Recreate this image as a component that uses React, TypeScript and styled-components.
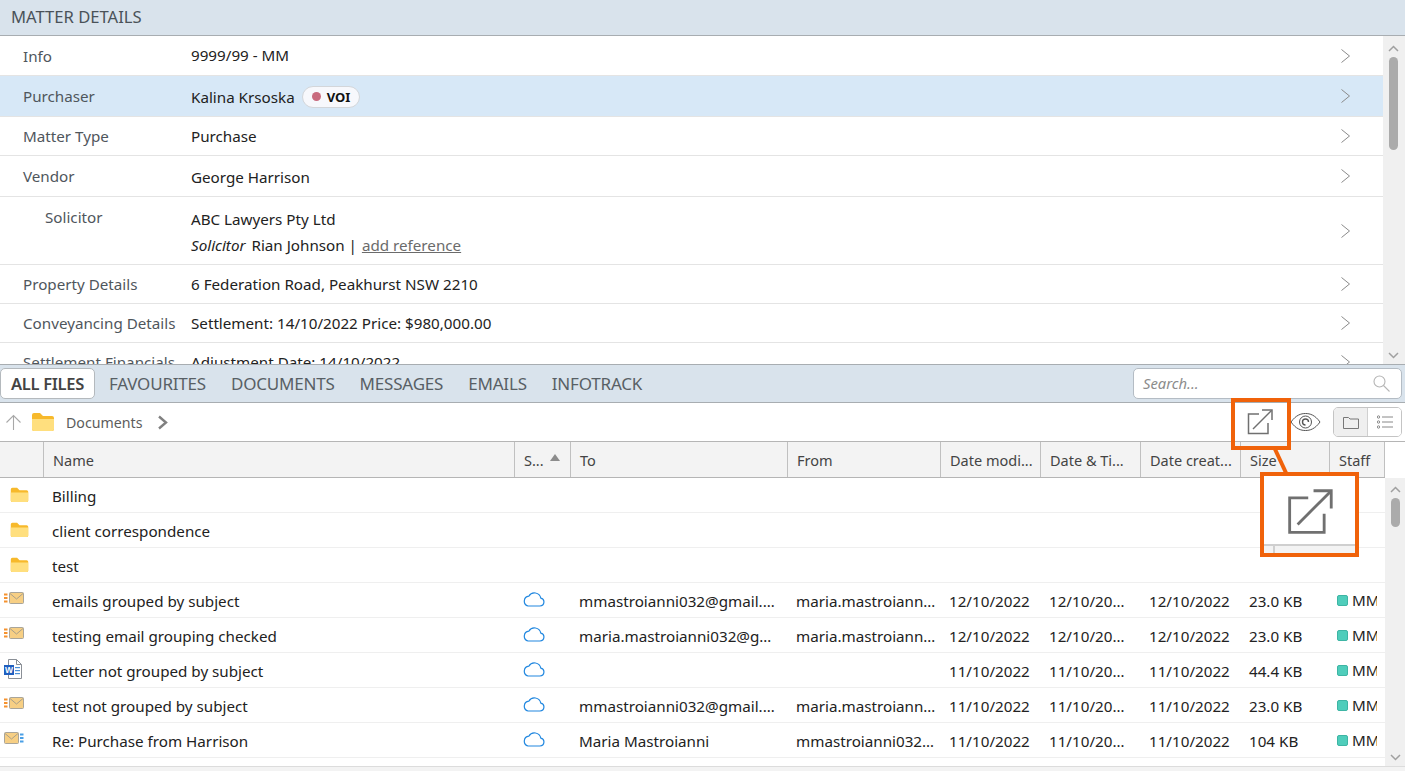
import React from 'react';
import styled, { createGlobalStyle } from 'styled-components';

const GlobalStyle = createGlobalStyle`
    html, body { margin: 0; padding: 0; background: #fff; }
    body { font-family: "Noto Sans", "Open Sans", "Liberation Sans", sans-serif; font-size: 15.2px; color: #333; }
    * { box-sizing: border-box; }
`;

const Page = styled.div`
    position: relative;
    width: 1405px;
    height: 771px;
    overflow: hidden;
    display: flex;
    flex-direction: column;
    background: #fff;
`;

const PanelHeader = styled.div`
    height: 36px;
    flex: none;
    display: flex;
    align-items: center;
    padding: 0 0 3px 11px;
    background: #d9e3ec;
    border-bottom: 1px solid #a8adb1;
    font-size: 16.6px;
    color: #4a5259;
`;

const DetailsArea = styled.div`
    height: 328px;
    flex: none;
    display: flex;
    overflow: hidden;
`;

const DetailsList = styled.div`
    width: 1383px;
    flex: none;
    overflow: hidden;
`;

const DetailRow = styled.div<{ $h: number; $selected?: boolean }>`
    height: ${(p) => p.$h}px;
    flex: none;
    display: grid;
    grid-template-columns: 191px 1fr 52px;
    align-items: center;
    border-bottom: 1px solid #e4e4e4;
    background: ${(p) => (p.$selected ? '#d7e8f7' : '#fff')};
`;

const DetailLabel = styled.div<{ $indent?: boolean; $top?: boolean }>`
    padding-left: ${(p) => (p.$indent ? 45 : 23)}px;
    align-self: ${(p) => (p.$top ? 'start' : 'center')};
    padding-top: ${(p) => (p.$top ? 10 : 0)}px;
    color: #4f565c;
    white-space: nowrap;
`;

const DetailValue = styled.div<{ $drop?: number }>`
    color: #222;
    display: flex;
    flex-direction: column;
    gap: 6px;
    padding-top: ${(p) => p.$drop ?? 0}px;
    padding-bottom: ${(p) => (p.$drop ? 0 : 1)}px;
`;

const ValueLine = styled.div`
    display: flex;
    align-items: center;
    gap: 3px;
`;

const Em = styled.em`
    font-style: italic;
    margin-right: 2px;
`;

const RefLink = styled.span`
    margin-left: 1px;
    color: #6b6b6b;
    text-decoration: underline;
`;

const Badge = styled.span`
    height: 22px;
    display: inline-flex;
    align-items: center;
    gap: 6px;
    padding: 0 9px;
    margin-left: 4px;
    background: #f7f8fc;
    border: 1px solid #d3d6da;
    border-radius: 11px;
    font-size: 13px;
    font-weight: 700;
    color: #111;
`;

const BadgeDot = styled.i`
    width: 9px;
    height: 9px;
    border-radius: 50%;
    background: #c86a7e;
`;

const ScrollTrack = styled.div`
    width: 22px;
    margin-left: auto;
    flex: none;
    position: relative;
    background: #f0f0f0;
`;

const ScrollThumb = styled.div<{ $top: number; $h: number }>`
    position: absolute;
    left: 6px;
    top: ${(p) => p.$top}px;
    width: 9px;
    height: ${(p) => p.$h}px;
    border-radius: 5px;
    background: #ababab;
`;

const ScrollArrow = styled.svg<{ $top?: number; $bottom?: number }>`
    position: absolute;
    left: 5px;
    width: 11px;
    height: 7px;
    ${(p) => (p.$top !== undefined ? `top: ${p.$top}px;` : `bottom: ${p.$bottom}px;`)}
`;

const TabBar = styled.div`
    height: 39px;
    flex: none;
    display: flex;
    align-items: center;
    padding: 0 3px 0 0;
    background: #d9e3ec;
    border-top: 1px solid #a8adb1;
    border-bottom: 1px solid #a8adb1;
`;

const Tab = styled.div<{ $active?: boolean }>`
    height: 31px;
    display: flex;
    align-items: center;
    padding: 0 ${(p) => (p.$active ? 10 : 12.5)}px 1px;
    margin-right: ${(p) => (p.$active ? 1.5 : 0)}px;
    font-size: ${(p) => (p.$active ? 16.5 : 17)}px;
    letter-spacing: ${(p) => (p.$active ? -0.3 : -0.2)}px;
    font-weight: ${(p) => (p.$active ? 600 : 400)};
    color: ${(p) => (p.$active ? '#444' : '#585f65')};
    background: ${(p) => (p.$active ? '#fff' : 'transparent')};
    border: ${(p) => (p.$active ? '1px solid #b4b9bd' : 'none')};
    border-radius: 5px;
`;

const SearchBox = styled.div`
    width: 269px;
    height: 31px;
    margin-left: auto;
    display: flex;
    align-items: center;
    justify-content: space-between;
    padding: 0 11px 1px 9px;
    background: #fff;
    border: 1px solid #b4bcc4;
    border-radius: 5px;
    font-style: italic;
    font-size: 14.8px;
    color: #8c8c8c;
`;

const Toolbar = styled.div`
    height: 38px;
    flex: none;
    display: flex;
    align-items: center;
    padding: 0 3px 0 5px;
    background: #fff;
`;

const UpSlot = styled.span`
    display: flex;
    margin-right: 9px;
`;

const Crumb = styled.span`
    margin: 0 15px 0 11px;
    font-size: 14.2px;
    color: #5c5c5c;
`;

const ToolIcons = styled.div`
    margin-left: auto;
    display: flex;
    align-items: center;
`;

const ToolSlot = styled.div<{ $w: number }>`
    width: ${(p) => p.$w}px;
    display: flex;
    justify-content: center;
    align-items: center;
`;

const ViewToggle = styled.div`
    width: 69px;
    height: 30px;
    margin-left: 12px;
    display: flex;
    border: 1px solid #c4c4c4;
    border-radius: 5px;
    overflow: hidden;
`;

const ToggleCell = styled.div<{ $active?: boolean }>`
    flex: 1;
    display: flex;
    align-items: center;
    justify-content: center;
    background: ${(p) => (p.$active ? '#efefef' : '#fff')};
    & + & { border-left: 1px solid #d0d0d0; }
`;

const columns = '44px 471px 56px 217px 153px 100px 100px 100px 89px 55px';

const HeaderRow = styled.div`
    height: 37px;
    flex: none;
    display: flex;
    border-top: 1px solid #b5b5b5;
`;

const HeaderCells = styled.div`
    width: 1385px;
    display: grid;
    grid-template-columns: ${columns};
    background: #f3f3f3;
    border-bottom: 1px solid #b5b5b5;
`;

const HeaderCell = styled.div`
    display: flex;
    align-items: center;
    gap: 6px;
    padding-left: 9px;
    border-right: 1px solid #c0c0c0;
    font-size: 14.5px;
    color: #444;
    white-space: nowrap;
    overflow: hidden;
`;

const SortMark = styled.span`
    width: 0;
    height: 0;
    margin-top: -4px;
    border-left: 5px solid transparent;
    border-right: 5px solid transparent;
    border-bottom: 7px solid #8c8c8c;
`;

const TableArea = styled.div`
    height: 288px;
    flex: none;
    display: flex;
    overflow: hidden;
`;

const TableRows = styled.div`
    width: 1385px;
    flex: none;
`;

const FileRow = styled.div`
    height: 35px;
    display: grid;
    grid-template-columns: ${columns};
    align-items: center;
    border-bottom: 1px solid #efefef;
    color: #222;
`;

const FileCell = styled.div<{ $trim?: number }>`
    padding: 1px ${(p) => p.$trim ?? 0}px 0 8px;
    white-space: nowrap;
    overflow: hidden;
    text-overflow: ellipsis;
`;

const IconCell = styled.div<{ $folder?: boolean }>`
    display: flex;
    align-items: center;
    padding-left: ${(p) => (p.$folder ? 10 : 4)}px;
    margin-top: ${(p) => (p.$folder ? 0 : -3)}px;
`;

const CloudCell = styled.div`
    display: flex;
    padding-left: 7px;
    margin-top: -2px;
`;

const StaffCell = styled.div`
    width: 47px;
    display: flex;
    align-items: center;
    gap: 4px;
    padding-left: 7px;
    overflow: hidden;
    white-space: nowrap;
`;

const StaffSquare = styled.i`
    width: 11px;
    height: 11px;
    flex: none;
    border-radius: 2px;
    background: #4fcdbb;
    border: 1px solid #3eb5a4;
`;

const StatusBar = styled.div`
    flex: 1;
    background: #f3f3f3;
    border-top: 1px solid #dcdcdc;
`;

const CalloutBox = styled.div<{ $x: number; $y: number; $w: number; $h: number }>`
    position: absolute;
    left: ${(p) => p.$x}px;
    top: ${(p) => p.$y}px;
    width: ${(p) => p.$w}px;
    height: ${(p) => p.$h}px;
    border: 4px solid #f0620a;
    display: flex;
    align-items: center;
    justify-content: center;
`;

const ZoomBox = styled(CalloutBox)`
    background: #fff;
    padding-bottom: 5px;
`;

const ZoomEdge = styled.div`
    position: absolute;
    left: 0;
    right: 0;
    bottom: 0;
    height: 9px;
    background: #f3f3f3;
    border-top: 2px solid #cfcfcf;
`;

const ZoomTick = styled.div`
    position: absolute;
    left: 9px;
    bottom: 0;
    width: 2px;
    height: 9px;
    background: #cfcfcf;
`;

const CalloutLine = styled.svg`
    position: absolute;
    left: 1266px;
    top: 445px;
    width: 30px;
    height: 32px;
`;

const Chevron = () => (
    <svg width="52" height="16" viewBox="0 0 52 16" fill="none">
        <path d="M10.5 1.500 L18.5 8 L10.5 14.500" stroke="#8a8a8a" strokeWidth="1" />
    </svg>
);

const ScrollBar = ({ top, h }: { top: number; h: number }) => (
    <ScrollTrack>
        <ScrollArrow $top={top - 12} viewBox="0 0 11 7" fill="none">
            <path d="M1 6 L5.5 1.5 L10 6" stroke="#a0a0a0" strokeWidth="1.5" />
        </ScrollArrow>
        <ScrollThumb $top={top} $h={h} />
        <ScrollArrow $bottom={5} viewBox="0 0 11 7" fill="none">
            <path d="M1 1 L5.5 5.5 L10 1" stroke="#a0a0a0" strokeWidth="1.5" />
        </ScrollArrow>
    </ScrollTrack>
);

const FolderIcon = ({ size = 19 }: { size?: number }) => (
    <svg width={size} height={size * 0.84} viewBox="0 0 24 20">
        <path d="M1 3a2 2 0 0 1 2-2h6l3 3h9a2 2 0 0 1 2 2v11a2 2 0 0 1-2 2H3a2 2 0 0 1-2-2z" fill="#f7b92b" />
        <path d="M1 7h22v10a2 2 0 0 1-2 2H3a2 2 0 0 1-2-2z" fill="#ffdf7e" />
    </svg>
);

const MailIcon = ({ lines }: { lines: 'left' | 'right' }) => {
    const lx = lines === 'left' ? 0 : 16;
    const mx = lines === 'left' ? 5 : 0;
    const c = lines === 'left' ? '#f5922e' : '#4a9fe6';
    return (
        <svg width="20" height="13" viewBox="0 0 20 13">
            <rect x={lx} y="1.500" width="3.500" height="2" fill={c} />
            <rect x={lx} y="5" width="3.500" height="2" fill={c} />
            <rect x={lx} y="8.500" width="3.500" height="2" fill={c} />
            <rect x={mx + 0.5} y="0.5" width="14" height="11" rx="1" fill="#f7cf84" stroke="#a9a59a" />
            <path d={`M${mx + 1} 1.5 L${mx + 7.5} 7 L${mx + 14} 1.5`} fill="none" stroke="#a9a08a" />
        </svg>
    );
};

const WordIcon = () => (
    <svg width="19" height="20" viewBox="0 0 19 20">
        <path d="M4.5 .5h8l5 5v14h-13z" fill="#fff" stroke="#8a8f96" />
        <path d="M12.5 .5v5h5" fill="none" stroke="#8a8f96" />
        <rect x="11" y="8" width="5" height="1.2" fill="#4a90d9" />
        <rect x="11" y="11" width="5" height="1.2" fill="#4a90d9" />
        <rect x="11" y="14" width="5" height="1.2" fill="#4a90d9" />
        <rect x="0" y="6" width="10" height="10" fill="#1f5fbf" />
        <text x="5" y="14" textAnchor="middle" fontSize="8.5" fontWeight="700" fill="#fff" fontFamily="Liberation Sans, sans-serif">W</text>
    </svg>
);

const CloudIcon = () => (
    <svg width="23" height="15" viewBox="0 0 23 15" fill="none">
        <path
            d="M6 14h12a4 4 0 0 0 .8-7.9A6.5 6.5 0 0 0 6.8 4.2 5 5 0 0 0 6 14z"
            stroke="#2288e0"
            strokeWidth="1.2"
        />
    </svg>
);

const OpenExternal = ({ size, weight }: { size: number; weight: number }) => (
    <svg width={size} height={size} viewBox="0 0 26 26" fill="none" stroke="#707070" strokeWidth={weight}>
        <path d="M12 5H1.5v19.5H21V14" />
        <path d="M6 20L24.5 1.5" />
        <path d="M15 1h10v10" />
    </svg>
);

const EyeIcon = () => (
    <svg width="31" height="20" viewBox="0 0 31 20" fill="none" stroke="#555" strokeWidth="1">
        <path d="M1 10C6 3 11 1.500 15.500 1.500S25 3 30 10C25 17 20 18.500 15.500 18.500S6 17 1 10z" />
        <circle cx="15.500" cy="10" r="6" />
        <path d="M15.500 13a3 3 0 1 1 3-3" strokeWidth="1.4" />
    </svg>
);

const SearchGlass = () => (
    <svg width="17" height="17" viewBox="0 0 17 17" fill="none" stroke="#b5b5b5" strokeWidth="1.1">
        <circle cx="6.500" cy="6.500" r="5.500" />
        <path d="M10.500 10.500L16.500 16.500" />
    </svg>
);

const files = [
    { icon: 'folder', name: 'Billing' },
    { icon: 'folder', name: 'client correspondence' },
    { icon: 'folder', name: 'test' },
    { icon: 'mailL', name: 'emails grouped by subject', to: 'mmastroianni032@gmail.com', from: 'maria.mastroianni032@gmail.com', mod: '12/10/2022', size: '23.0 KB' },
    { icon: 'mailL', name: 'testing email grouping checked', to: 'maria.mastroianni032@gmail.com', from: 'maria.mastroianni032@gmail.com', mod: '12/10/2022', size: '23.0 KB' },
    { icon: 'word', name: 'Letter not grouped by subject', to: '', from: '', mod: '11/10/2022', size: '44.4 KB' },
    { icon: 'mailL', name: 'test not grouped by subject', to: 'mmastroianni032@gmail.com', from: 'maria.mastroianni032@gmail.com', mod: '11/10/2022', size: '23.0 KB' },
    { icon: 'mailR', name: 'Re: Purchase from Harrison', to: 'Maria Mastroianni', from: 'mmastroianni032@gmail.com', mod: '11/10/2022', size: '104 KB' },
];

const headers = ['', 'Name', 'S...', 'To', 'From', 'Date modi...', 'Date & Ti...', 'Date creat...', 'Size', 'Staff'];
const tabs = ['FAVOURITES', 'DOCUMENTS', 'MESSAGES', 'EMAILS', 'INFOTRACK'];

const App = () => (
    <Page>
        <GlobalStyle />
        <PanelHeader>MATTER DETAILS</PanelHeader>
        <DetailsArea>
            <DetailsList>
                <DetailRow $h={40}>
                    <DetailLabel>Info</DetailLabel>
                    <DetailValue>9999/99 - MM</DetailValue>
                    <Chevron />
                </DetailRow>
                <DetailRow $h={41} $selected>
                    <DetailLabel>Purchaser</DetailLabel>
                    <DetailValue $drop={1}>
                        <ValueLine>
                            Kalina Krsoska
                            <Badge><BadgeDot />VOI</Badge>
                        </ValueLine>
                    </DetailValue>
                    <Chevron />
                </DetailRow>
                <DetailRow $h={39}>
                    <DetailLabel>Matter Type</DetailLabel>
                    <DetailValue>Purchase</DetailValue>
                    <Chevron />
                </DetailRow>
                <DetailRow $h={41}>
                    <DetailLabel>Vendor</DetailLabel>
                    <DetailValue $drop={1}>George Harrison</DetailValue>
                    <Chevron />
                </DetailRow>
                <DetailRow $h={68}>
                    <DetailLabel $indent $top>Solicitor</DetailLabel>
                    <DetailValue $drop={3}>
                        <div>ABC Lawyers Pty Ltd</div>
                        <div><Em>Solicitor</Em> Rian Johnson | <RefLink>add reference</RefLink></div>
                    </DetailValue>
                    <Chevron />
                </DetailRow>
                <DetailRow $h={39}>
                    <DetailLabel>Property Details</DetailLabel>
                    <DetailValue>6 Federation Road, Peakhurst NSW 2210</DetailValue>
                    <Chevron />
                </DetailRow>
                <DetailRow $h={39}>
                    <DetailLabel>Conveyancing Details</DetailLabel>
                    <DetailValue>Settlement: 14/10/2022 Price: $980,000.00</DetailValue>
                    <Chevron />
                </DetailRow>
                <DetailRow $h={39}>
                    <DetailLabel>Settlement Financials</DetailLabel>
                    <DetailValue>Adjustment Date: 14/10/2022</DetailValue>
                    <Chevron />
                </DetailRow>
            </DetailsList>
            <ScrollBar top={21} h={93} />
        </DetailsArea>
        <TabBar>
            <Tab $active>ALL FILES</Tab>
            {tabs.map((t) => <Tab key={t}>{t}</Tab>)}
            <SearchBox>
                Search...
                <SearchGlass />
            </SearchBox>
        </TabBar>
        <Toolbar>
            <UpSlot>
                <svg width="17" height="17" viewBox="0 0 17 17" fill="none" stroke="#a8a8a8" strokeWidth="1.1">
                    <path d="M8.500 16V1.500M1.500 8.500l7-7 7 7" />
                </svg>
            </UpSlot>
            <FolderIcon size={24} />
            <Crumb>Documents</Crumb>
            <svg width="12" height="15" viewBox="0 0 12 15" fill="none" stroke="#808080" strokeWidth="2.4">
                <path d="M2 1.500l7 6-7 6" />
            </svg>
            <ToolIcons>
                <ToolSlot $w={60}><OpenExternal size={26} weight={1.5} /></ToolSlot>
                <EyeIcon />
                <ViewToggle>
                    <ToggleCell $active>
                        <svg width="16" height="13" viewBox="0 0 16 13" fill="none" stroke="#777" strokeWidth="1">
                            <path d="M.5 1.500h5l1.500 1.500h8.500v9.500H.5z" />
                        </svg>
                    </ToggleCell>
                    <ToggleCell>
                        <svg width="16" height="14" viewBox="0 0 16 14" fill="none" stroke="#888" strokeWidth="1">
                            <circle cx="1.500" cy="2" r="1.200" />
                            <circle cx="1.500" cy="7" r="1.200" />
                            <circle cx="1.500" cy="12" r="1.200" />
                            <path d="M5 2h11M5 7h11M5 12h11" />
                        </svg>
                    </ToggleCell>
                </ViewToggle>
            </ToolIcons>
        </Toolbar>
        <HeaderRow>
            <HeaderCells>
                {headers.map((h) => (
                    <HeaderCell key={h || 'icon'}>
                        {h}
                        {h === 'S...' && <SortMark />}
                    </HeaderCell>
                ))}
            </HeaderCells>
        </HeaderRow>
        <TableArea>
            <TableRows>
                {files.map((f) => (
                    <FileRow key={f.name}>
                        <IconCell $folder={f.icon === 'folder'}>
                            {f.icon === 'folder' && <FolderIcon />}
                            {f.icon === 'mailL' && <MailIcon lines="left" />}
                            {f.icon === 'mailR' && <MailIcon lines="right" />}
                            {f.icon === 'word' && <WordIcon />}
                        </IconCell>
                        <FileCell>{f.name}</FileCell>
                        {f.mod ? <CloudCell><CloudIcon /></CloudCell> : <div />}
                        <FileCell $trim={8}>{f.to}</FileCell>
                        <FileCell $trim={4}>{f.from}</FileCell>
                        <FileCell>{f.mod}</FileCell>
                        <FileCell $trim={15}>{f.mod}</FileCell>
                        <FileCell>{f.mod}</FileCell>
                        <FileCell>{f.size}</FileCell>
                        {f.mod ? <StaffCell><StaffSquare />MM</StaffCell> : <div />}
                    </FileRow>
                ))}
            </TableRows>
            <ScrollBar top={20} h={29} />
        </TableArea>
        <StatusBar />
        <CalloutLine viewBox="0 0 30 32" fill="none">
            <path d="M8 2L21 30" stroke="#f0620a" strokeWidth="4" />
        </CalloutLine>
        <CalloutBox $x={1231} $y={398} $w={60} $h={52} />
        <ZoomBox $x={1260} $y={472} $w={99} $h={85}>
            <OpenExternal size={46} weight={1.6} />
            <ZoomEdge><ZoomTick /></ZoomEdge>
        </ZoomBox>
    </Page>
);

export default App;
